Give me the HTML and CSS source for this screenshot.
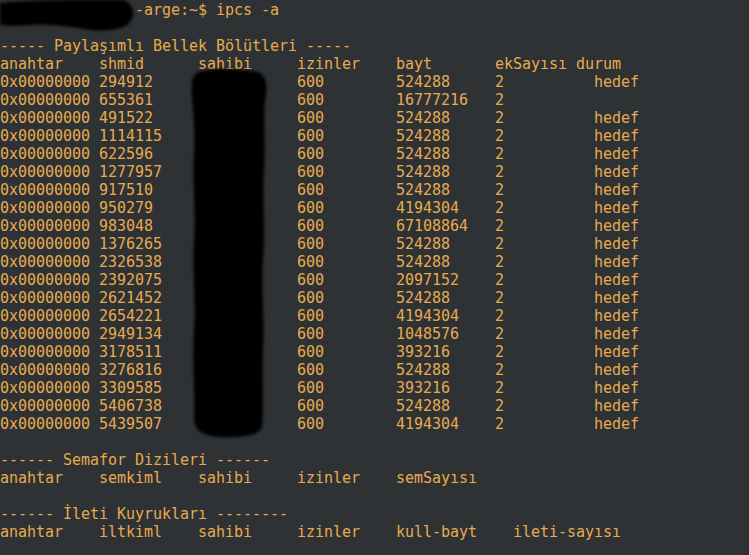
FILE: index.html
```html
<!DOCTYPE html>
<html lang="tr">
<head>
<meta charset="utf-8">
<title>ipcs -a</title>
<link rel="stylesheet" href="styles.css">
</head>
<body>
<div class="term">
<pre class="out">               -arge:~$ ipcs -a

----- Paylaşımlı Bellek Bölütleri -----
anahtar    shmid      sahibi     izinler    bayt       ekSayısı durum
0x00000000 294912                600        524288     2          hedef
0x00000000 655361                600        16777216   2
0x00000000 491522                600        524288     2          hedef
0x00000000 1114115               600        524288     2          hedef
0x00000000 622596                600        524288     2          hedef
0x00000000 1277957               600        524288     2          hedef
0x00000000 917510                600        524288     2          hedef
0x00000000 950279                600        4194304    2          hedef
0x00000000 983048                600        67108864   2          hedef
0x00000000 1376265               600        524288     2          hedef
0x00000000 2326538               600        524288     2          hedef
0x00000000 2392075               600        2097152    2          hedef
0x00000000 2621452               600        524288     2          hedef
0x00000000 2654221               600        4194304    2          hedef
0x00000000 2949134               600        1048576    2          hedef
0x00000000 3178511               600        393216     2          hedef
0x00000000 3276816               600        524288     2          hedef
0x00000000 3309585               600        393216     2          hedef
0x00000000 5406738               600        524288     2          hedef
0x00000000 5439507               600        4194304    2          hedef

------ Semafor Dizileri ------
anahtar    semkiml    sahibi     izinler    semSayısı

------ İleti Kuyrukları --------
anahtar    iltkiml    sahibi     izinler    kull-bayt    ileti-sayısı
</pre>
<svg class="redact" width="749" height="555" viewBox="0 0 749 555" aria-hidden="true">
<defs><filter id="soft" x="-10%" y="-10%" width="120%" height="120%"><feGaussianBlur stdDeviation="1.4"/></filter></defs>
<g fill="#050302" filter="url(#soft)">
<path d="M0,3 C20,1 50,0 80,0 L124,0 C130,3 134,8 133,15 C132,22 127,27 117,29 C106,31 96,31 84,29 C66,26 50,24 34,25 C20,26 8,26 0,25 Z"/>
<path d="M198,72 C215,67 240,69 258,72 C267,76 268,86 265,100 C263,120 266,140 264,170 C262,200 266,230 263,260 C261,290 265,320 263,350 C262,380 264,410 262,428 C258,436 240,438 220,437 C202,436 194,430 194,418 C195,390 192,360 194,330 C196,300 192,270 194,240 C196,210 192,180 194,150 C196,120 190,95 192,82 C193,76 195,73 198,72 Z"/>
</g>
</svg>
</div>
</body>
</html>
```
FILE: styles.css
```css
html, body {
  margin: 0;
  padding: 0;
  background: #2e3235;
}
.term {
  position: relative;
  width: 749px;
  height: 555px;
  overflow: hidden;
  background: #2e3235;
}
.out {
  margin: 0;
  padding: 1px 0 0 0;
  font-family: "DejaVu Sans Mono", "Liberation Mono", monospace;
  font-size: 15px;
  letter-spacing: -0.03px;
  line-height: 18px;
  color: #e8aa4e;
  white-space: pre;
}
.redact {
  position: absolute;
  left: 0;
  top: 0;
  pointer-events: none;
}
```
